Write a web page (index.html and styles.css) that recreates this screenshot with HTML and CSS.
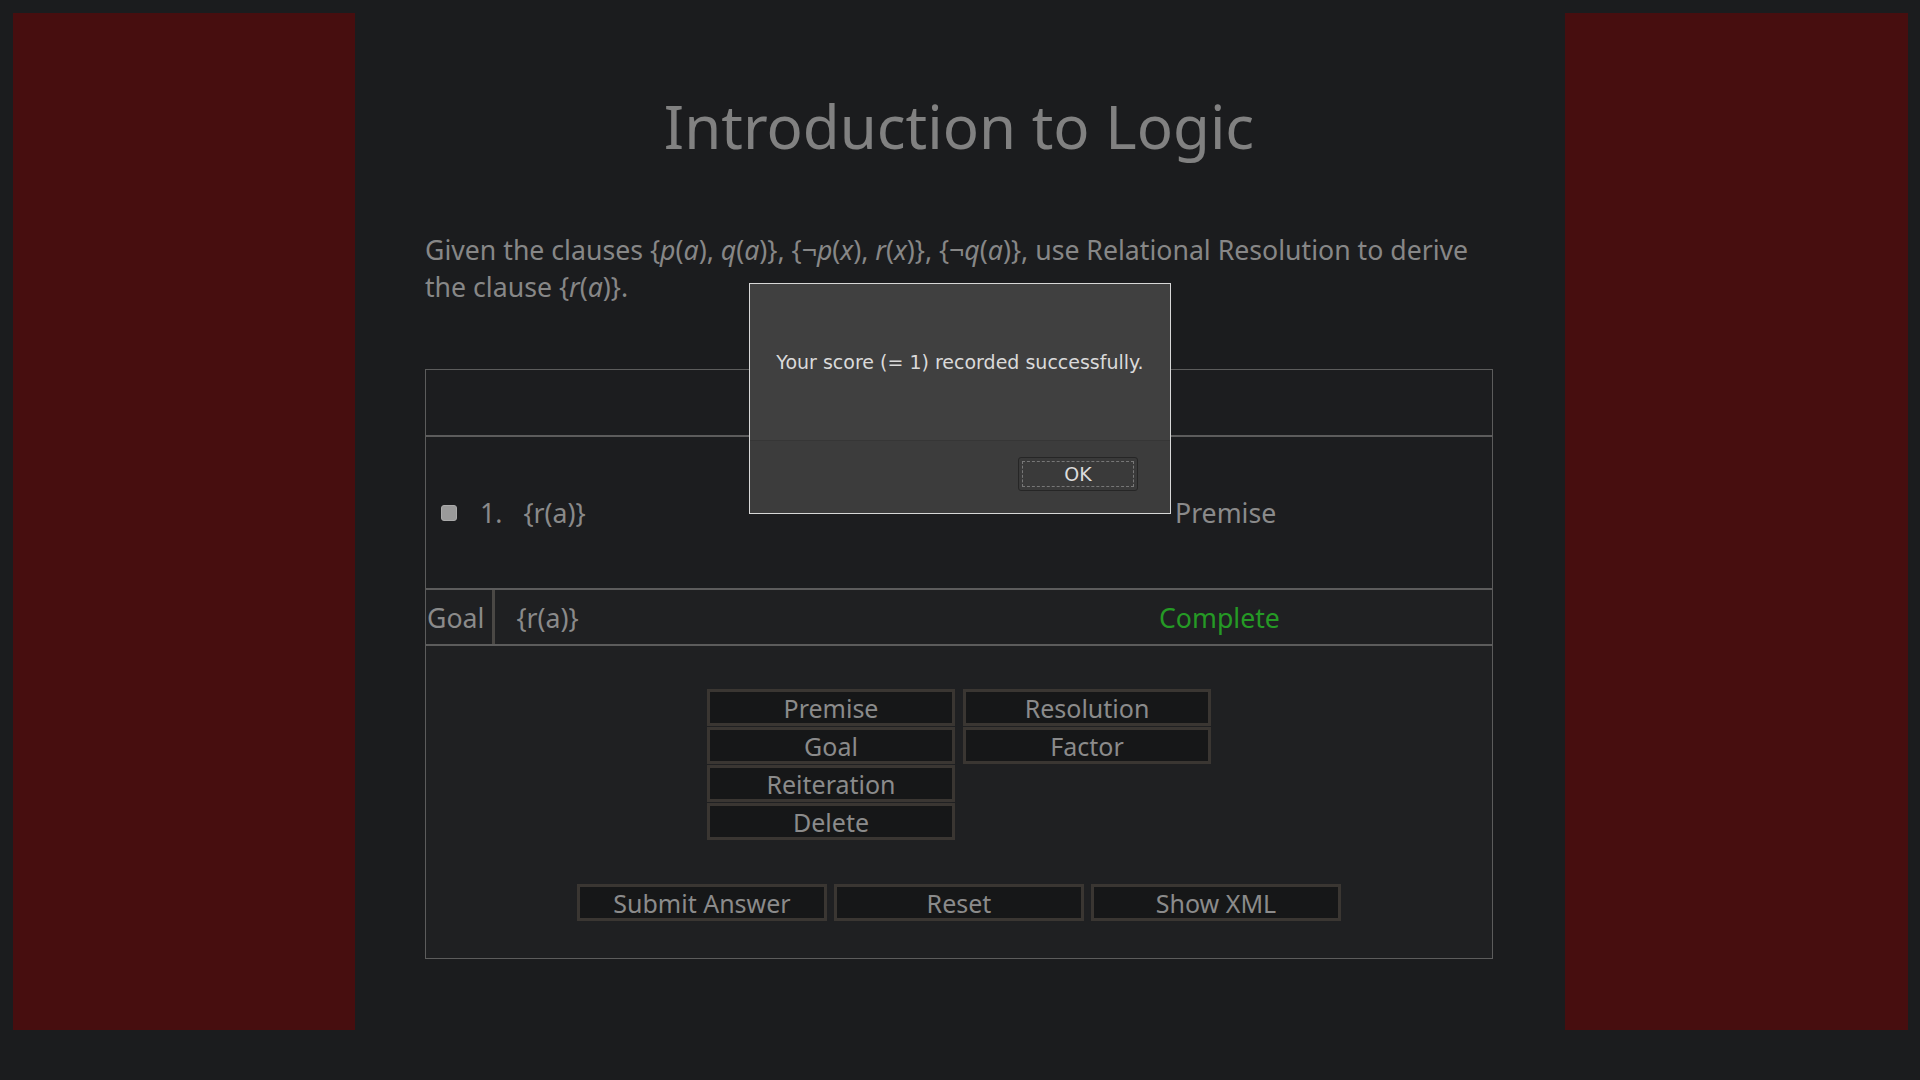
FILE: index.html
```html
<!DOCTYPE html>
<html>
<head>
<meta charset="utf-8">
<link rel="stylesheet" href="styles.css">
</head>
<body>
<div class="page">
  <aside class="side"></aside>
  <main class="center">
    <h1 class="title">Introduction to Logic</h1>
    <p class="prompt">Given the clauses {<i>p</i>(<i>a</i>), <i>q</i>(<i>a</i>)}, {¬<i>p</i>(<i>x</i>), <i>r</i>(<i>x</i>)}, {¬<i>q</i>(<i>a</i>)}, use Relational Resolution to derive the clause {<i>r</i>(<i>a</i>)}.</p>
    <div class="proof">
      <div class="proof-head"></div>
      <div class="proof-lines">
        <div class="line">
          <span class="check"></span>
          <span class="num">1.</span>
          <span class="formula">{r(a)}</span>
          <span class="just">Premise</span>
        </div>
      </div>
      <div class="goal-row">
        <div class="goal-label">Goal</div>
        <div class="goal-formula">{r(a)}</div>
        <div class="goal-status">Complete</div>
      </div>
      <div class="controls">
        <div class="rules">
          <div class="col">
            <button class="btn">Premise</button>
            <button class="btn">Goal</button>
            <button class="btn">Reiteration</button>
            <button class="btn">Delete</button>
          </div>
          <div class="col">
            <button class="btn">Resolution</button>
            <button class="btn">Factor</button>
          </div>
        </div>
        <div class="actions">
          <button class="btn">Submit Answer</button>
          <button class="btn">Reset</button>
          <button class="btn">Show XML</button>
        </div>
      </div>
    </div>
  </main>
  <aside class="side"></aside>
</div>
<div class="dialog">
  <div class="dialog-msg">Your score (= 1) recorded successfully.</div>
  <div class="dialog-foot"><button class="ok"><span>OK</span></button></div>
</div>
</body>
</html>
```
FILE: styles.css
```css
html, body {
  margin: 0;
  padding: 0;
  background: #1b1c1e;
  height: 1080px;
  overflow: hidden;
}
body {
  font-family: "Noto Sans", "Open Sans", sans-serif;
  color: #8a8a8a;
}
.page {
  display: grid;
  grid-template-columns: 342px 1fr 343px;
  padding: 13px 12px 0 13px;
  height: 1017px;
}
.side {
  background: #470e0f;
}
.center {
  padding: 0 72px 0 70px;
}
.title {
  margin: 78px 0 0;
  font-size: 60px;
  font-weight: 400;
  line-height: 70px;
  text-align: center;
  color: #818181;
}
.prompt {
  margin: 70px 0 0;
  font-size: 26.67px;
  line-height: 37px;
  color: #878787;
}
.prompt i {
  font-style: italic;
}
.proof {
  margin-top: 64px;
  border: 1px solid #5c5c5c;
  background: #1c1d1f;
}
.proof-head {
  height: 65px;
  border-bottom: 2px solid #5c5c5c;
}
.proof-lines {
  height: 151px;
  display: flex;
  align-items: center;
}
.line {
  display: flex;
  align-items: center;
  width: 100%;
  font-size: 26.67px;
}
.check {
  width: 14px;
  height: 14px;
  margin-left: 15px;
  background: #9a9a9a;
  border: 1px solid #aaa;
  border-radius: 3px;
}
.num {
  margin-left: 23px;
}
.formula {
  margin-left: 21px;
}
.just {
  margin-left: auto;
  width: 317px;
}
.goal-row {
  display: flex;
  align-items: center;
  height: 54px;
  border-top: 2px solid #5c5c5c;
  border-bottom: 2px solid #5c5c5c;
  background: #1f2022;
  font-size: 26.67px;
}
.goal-label {
  height: 100%;
  display: flex;
  align-items: center;
  padding: 0 8px 0 1px;
  border-right: 3px solid #4a4845;
}
.goal-formula {
  margin-left: 21px;
}
.goal-status {
  margin-left: auto;
  width: 333px;
  color: #259a25;
}
.controls {
  background: #1f2022;
  padding: 43px 0 37px;
  display: flex;
  flex-direction: column;
  align-items: center;
}
.rules {
  display: flex;
  gap: 8px;
}
.col {
  display: flex;
  flex-direction: column;
  gap: 1px;
}
.btn {
  width: 248px;
  height: 37px;
  padding: 0;
  background: #161718;
  border: 3px solid #3a3632;
  color: #8b8b8b;
  font-family: "Noto Sans", "Open Sans", sans-serif;
  font-size: 25px;
  line-height: 28px;
}
.actions {
  display: flex;
  gap: 7px;
  margin-top: 44px;
}
.actions .btn {
  width: 250px;
}
.dialog {
  position: absolute;
  left: 749px;
  top: 283px;
  width: 420px;
  height: 229px;
  border: 1px solid #d8d8d8;
  background: #3e3e3e;
  display: flex;
  flex-direction: column;
  font-family: "DejaVu Sans", sans-serif;
  color: #dadada;
}
.dialog-msg {
  height: 156px;
  display: flex;
  align-items: center;
  justify-content: center;
  font-size: 19px;
  background: #404040;
  border-bottom: 1px solid #363636;
}
.dialog-foot {
  flex: 1;
  display: flex;
  justify-content: flex-end;
  align-items: flex-start;
  padding: 16px 32px 0 0;
  background: #3c3c3c;
}
.ok {
  width: 120px;
  height: 34px;
  padding: 3px;
  background: #3a3a3a;
  border: 1px solid #262626;
  border-radius: 3px;
  font-family: "DejaVu Sans", sans-serif;
  font-size: 19px;
  color: #dcdcdc;
}
.ok span {
  display: flex;
  align-items: center;
  justify-content: center;
  height: 100%;
  border: 1px dashed #777;
  box-sizing: border-box;
}
```
